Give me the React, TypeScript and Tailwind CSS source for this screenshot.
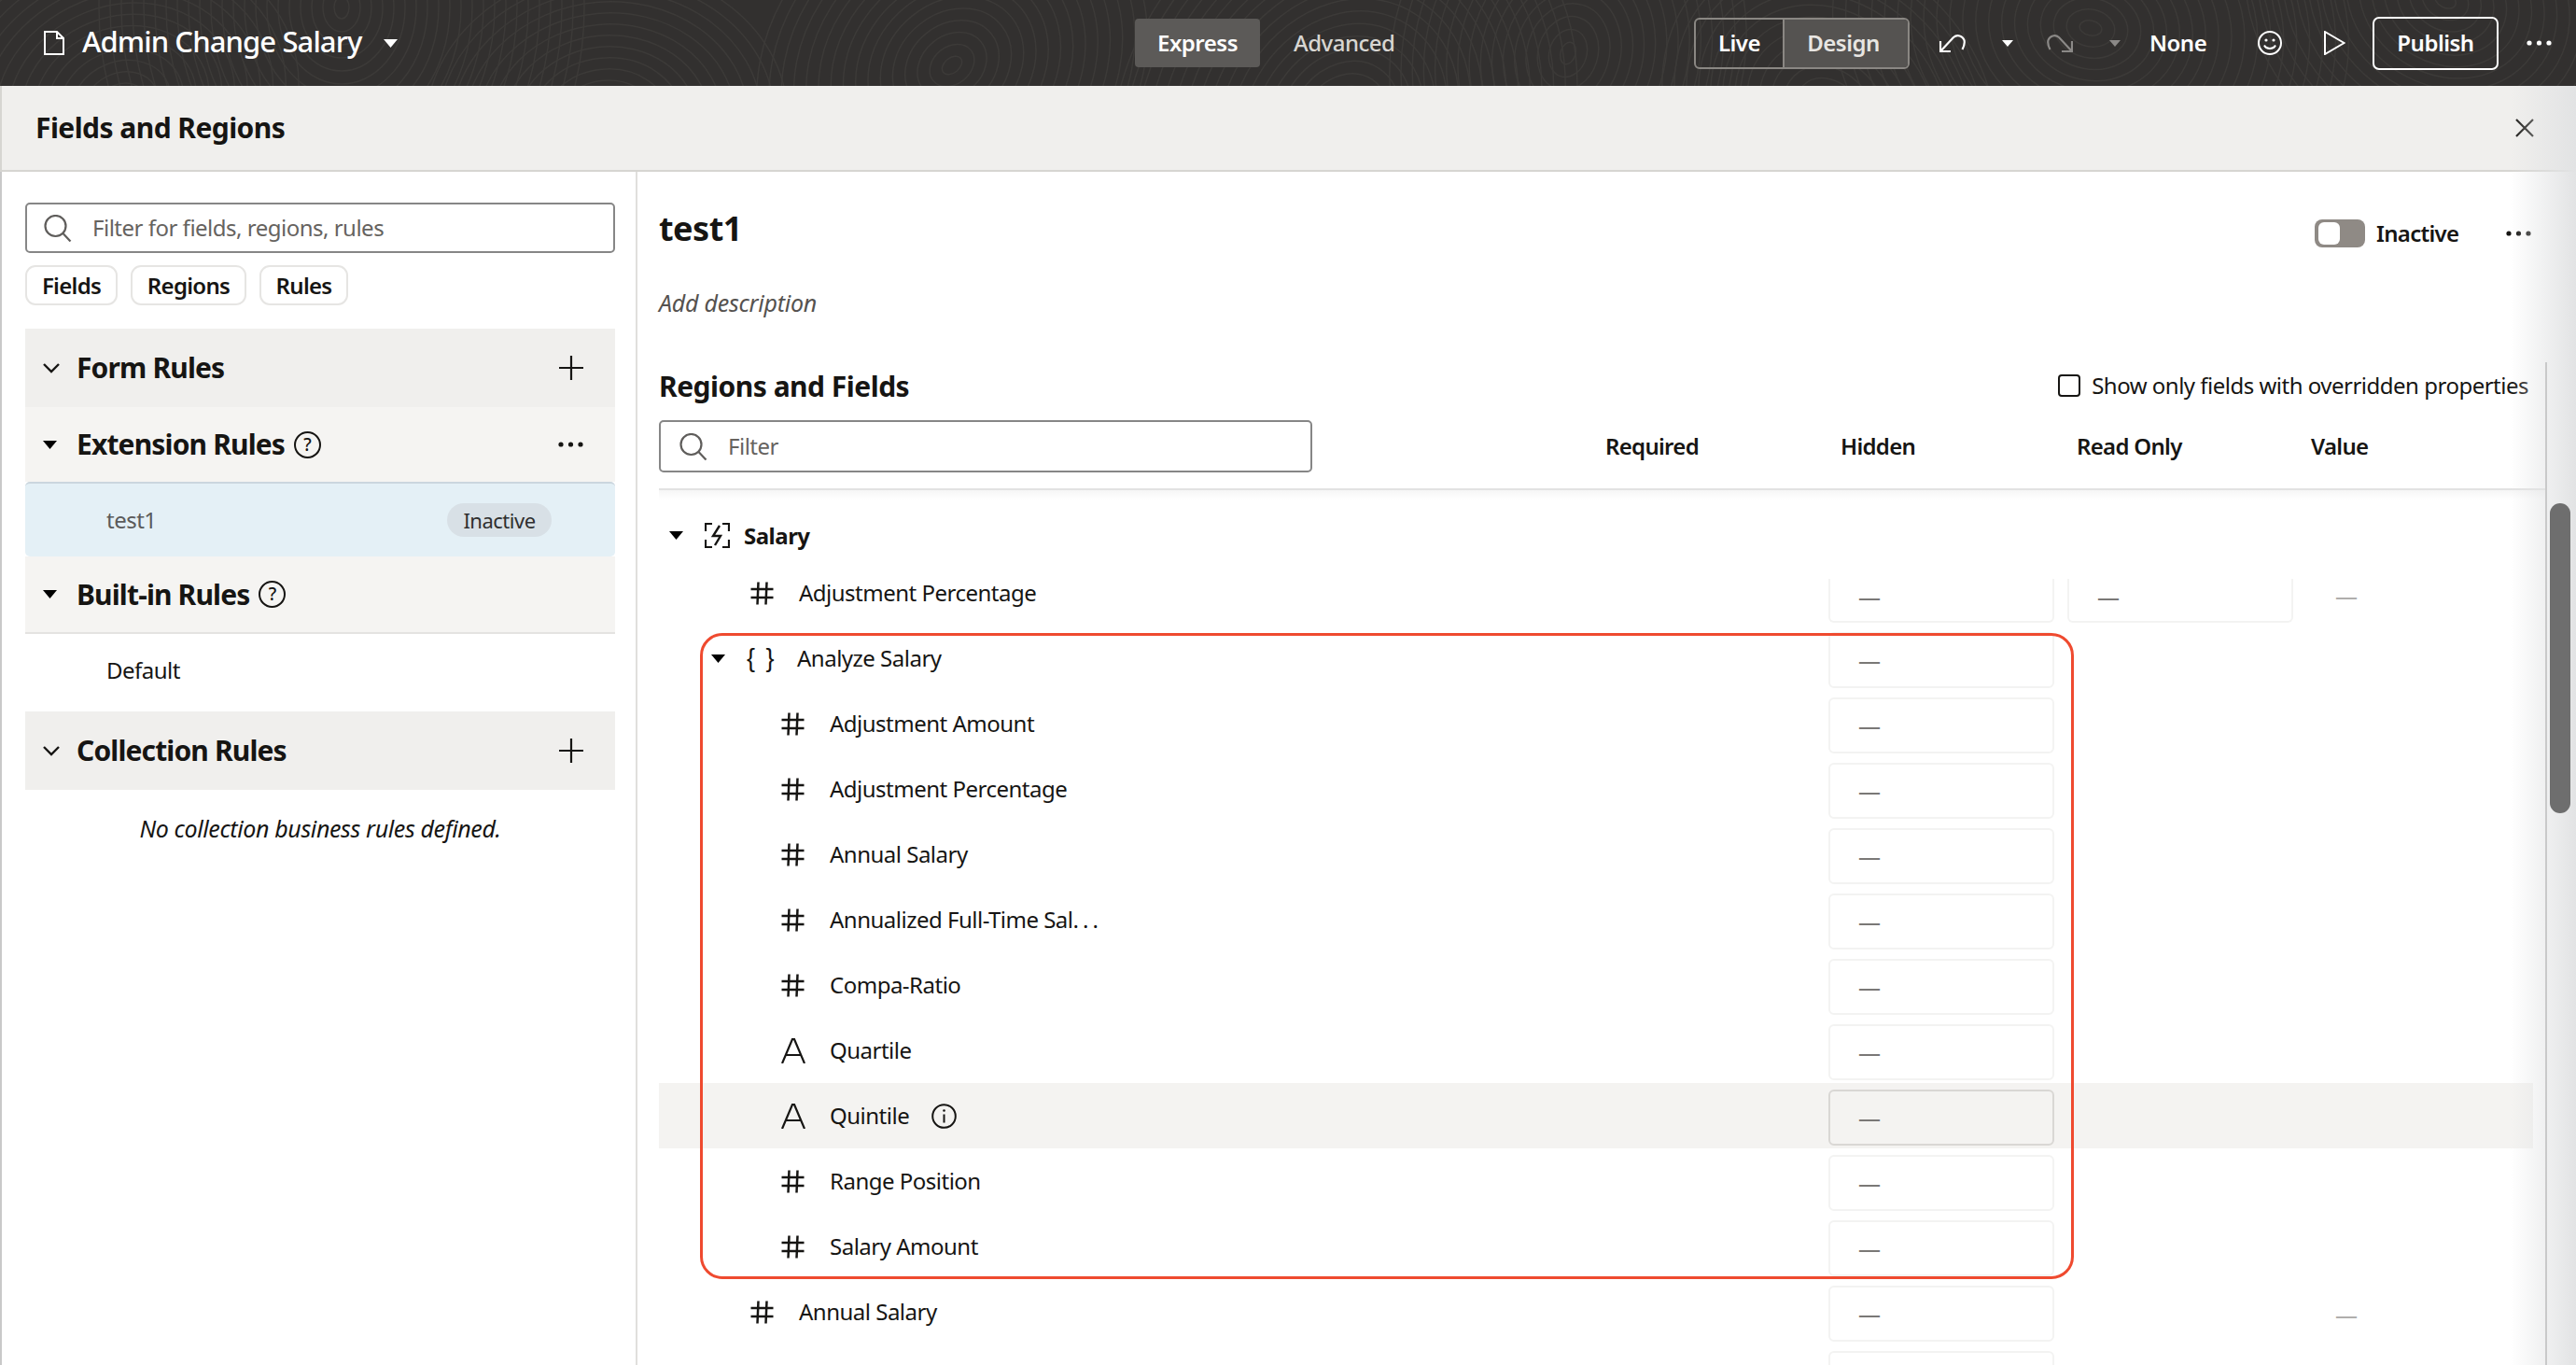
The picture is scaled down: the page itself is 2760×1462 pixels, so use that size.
import React from 'react';

type FieldIcon = 'hash' | 'text' | 'group';

interface FieldRow {
  label: string;
  icon: FieldIcon;
  child?: boolean;
  readOnly?: boolean;
  value?: boolean;
  active?: boolean;
  clipped?: boolean;
  info?: boolean;
  truncated?: boolean;
}

const rows: FieldRow[] = [
  { label: 'Adjustment Percentage', icon: 'hash', readOnly: true, value: true, clipped: true },
  { label: 'Analyze Salary', icon: 'group' },
  { label: 'Adjustment Amount', icon: 'hash', child: true },
  { label: 'Adjustment Percentage', icon: 'hash', child: true },
  { label: 'Annual Salary', icon: 'hash', child: true },
  { label: 'Annualized Full-Time Sal', icon: 'hash', child: true, truncated: true },
  { label: 'Compa-Ratio', icon: 'hash', child: true },
  { label: 'Quartile', icon: 'text', child: true },
  { label: 'Quintile', icon: 'text', child: true, active: true, info: true },
  { label: 'Range Position', icon: 'hash', child: true },
  { label: 'Salary Amount', icon: 'hash', child: true },
  { label: 'Annual Salary', icon: 'hash', value: true },
  { label: '', icon: 'hash' },
];

// contour lines in the header texture: [cx, cy, rings]
const swirls = [
  [366, 8, 22],
  [1680, 57, 16],
  [1440, 130, 20],
  [1020, 70, 16],
  [130, 110, 14],
  [650, 130, 14],
  [2240, 30, 20],
  [2620, 0, 16],
  [1960, 120, 14],
];

const HeaderTexture = () => (
  <svg className="absolute inset-0 w-full h-full" viewBox="0 0 2760 92" preserveAspectRatio="none">
    {swirls.map(([cx, cy, rings], i) => (
      <g key={i} fill="none" stroke="#3c3a38" strokeWidth="1.5">
        {Array.from({ length: rings }).map((_, r) => (
          <ellipse key={r} cx={cx} cy={cy} rx={8 + r * 12} ry={12 + r * 14} transform={`rotate(${i * 17} ${cx} ${cy})`} />
        ))}
      </g>
    ))}
  </svg>
);

const Caret = ({ className = 'text-black' }: { className?: string }) => (
  <svg width="15" height="9" viewBox="0 0 15 9" className={className}>
    <path d="M0 0h15L7.5 9z" fill="currentColor" />
  </svg>
);

const Chevron = () => (
  <svg width="18" height="11" viewBox="0 0 18 11" fill="none" stroke="#161513" strokeWidth="2.4">
    <path d="M1 1l8 8 8-8" />
  </svg>
);

const Plus = () => (
  <svg width="26" height="26" viewBox="0 0 26 26" stroke="#161513" strokeWidth="2.2">
    <path d="M13 0v26M0 13h26" />
  </svg>
);

const Dots = ({ className = 'text-[#161513]' }: { className?: string }) => (
  <svg width="27" height="6" viewBox="0 0 27 6" className={className} fill="currentColor">
    <circle cx="3" cy="3" r="2.6" />
    <circle cx="13.5" cy="3" r="2.6" />
    <circle cx="24" cy="3" r="2.6" />
  </svg>
);

const SearchIcon = () => (
  <svg width="30" height="29" viewBox="0 0 30 29" fill="none" stroke="#5f5d5b" strokeWidth="2.2">
    <circle cx="12.5" cy="12" r="11" />
    <path d="M20.5 20l8 8.5" />
  </svg>
);

const Help = () => (
  <span className="flex h-[29px] w-[29px] items-center justify-center rounded-full border-2 border-[#161513] text-[19px] font-medium leading-none tracking-normal text-[#161513]">
    ?
  </span>
);

const HashIcon = () => (
  <svg width="25" height="25" viewBox="0 0 25 25" fill="none" stroke="#161513" strokeWidth="2.5">
    <path d="M8.5 0.5L7.5 24.5M17.5 0.5L16.5 24.5M0.5 8h24M0.5 17h24" />
  </svg>
);

const LetterIcon = () => (
  <svg width="26" height="27" viewBox="0 0 26 27" fill="none" stroke="#161513" strokeWidth="2.2">
    <path d="M1 27L12 1h2l11 26M5.5 18h15" />
  </svg>
);

const InfoIcon = () => (
  <svg width="27" height="27" viewBox="0 0 27 27" fill="none" stroke="#161513" strokeWidth="2">
    <circle cx="13.5" cy="13.5" r="12.3" />
    <path d="M13.5 11.5v9" />
    <circle cx="13.5" cy="7.5" r="1.3" fill="#161513" stroke="none" />
  </svg>
);

const SalaryIcon = () => (
  <svg width="27" height="27" viewBox="0 0 27 27" fill="none" stroke="#161513" strokeWidth="2.2">
    <path d="M8 1H1v8M19 1h7v8M1 18v8h7M26 18v8h-7" />
    <path d="M16 3L9 14h8l-6 10" strokeWidth="2.4" />
  </svg>
);

const SectionRow = ({
  title,
  bg,
  chevron,
  help,
  action,
  className = '',
}: {
  title: string;
  bg: string;
  chevron?: boolean;
  help?: boolean;
  action?: React.ReactNode;
  className?: string;
}) => (
  <div className={`flex items-center pl-[19px] pr-[34px] ${bg} ${className}`}>
    <span className="flex w-[36px]">{chevron ? <Chevron /> : <Caret />}</span>
    <span className="text-[30px] font-bold leading-none tracking-[-0.85px] text-[#161513]">{title}</span>
    {help && (
      <span className="ml-[10px]">
        <Help />
      </span>
    )}
    <span className="ml-auto flex">{action}</span>
  </div>
);

const Cell = ({ active, clipped, empty }: { active?: boolean; clipped?: boolean; empty?: boolean }) => (
  <div
    className={`flex w-[242px] items-center pl-[30px] text-[24px] font-medium leading-none tracking-normal border-2 ${
      clipped ? 'mt-[20px] h-[47px] border-t-0 rounded-b-[6px] pb-[8px]' : 'mt-[7px] h-[60px] rounded-[6px]'
    } ${active ? 'border-[#d9d7d4] bg-[#f4f3f1]' : 'border-[#f3f3f2] bg-white'}`}
  >
    {!empty && <span className="text-[#7a7876]">—</span>}
  </div>
);

const TreeRow = ({ row }: { row: FieldRow }) => (
  <div className={`flex h-[70px] shrink-0 ${row.active ? 'bg-[#f4f3f1]' : ''}`}>
    <div className="flex h-[70px] w-[1253px] shrink-0 items-center text-[24px] text-[#161513]">
      {row.label &&
        (row.icon === 'group' ? (
          <>
            <span className="ml-[56px] flex w-[38px]">
              <Caret />
            </span>
            <span className="w-[54px] font-['Liberation_Sans',sans-serif] text-[27px] font-normal leading-none tracking-[2px]">{'{ }'}</span>
          </>
        ) : (
          <span className={`flex ${row.child ? 'ml-[131px] w-[52px]' : 'ml-[98px] w-[52px]'}`}>
            {row.icon === 'hash' ? <HashIcon /> : <LetterIcon />}
          </span>
        ))}
      <span>
        {row.label}
        {row.truncated && <span className="tracking-[4px]">...</span>}
      </span>
      {row.info && (
        <span className="ml-[24px] flex">
          <InfoIcon />
        </span>
      )}
    </div>
    <Cell active={row.active} clipped={row.clipped} empty={!row.label} />
    {row.readOnly && (
      <div className="ml-[14px]">
        <Cell clipped />
      </div>
    )}
    {row.value && (
      <div className={`flex items-center pt-[6px] text-[24px] font-medium leading-none tracking-normal text-[#b0aeac] ${row.readOnly ? 'ml-[45px]' : 'ml-[301px]'}`}>—</div>
    )}
  </div>
);

const App = () => {
  return (
    <div className="relative flex h-[1462px] w-[2760px] flex-col overflow-hidden bg-white font-['Noto_Sans',sans-serif] tracking-[-0.5px] text-[#161513]">
      <header className="relative flex h-[92px] shrink-0 items-center bg-[#32302f] text-white">
        <HeaderTexture />
        <div className="relative flex w-full items-center">
          <svg width="22" height="26" viewBox="0 0 22 26" fill="none" stroke="#fff" strokeWidth="2" className="ml-[47px]">
            <path d="M1 1h13l7 7v17H1zM14 1v7h7" />
          </svg>
          <span className="ml-[19px] w-[299px] whitespace-nowrap pb-[3px] text-[31px] font-medium leading-none tracking-[-0.9px]">Admin Change Salary</span>
          <span className="ml-[24px] flex">
            <Caret className="text-white" />
          </span>

          <div className="ml-[790px] flex h-[52px] w-[134px] items-center justify-center rounded-[4px] bg-[#5c5a58] text-[24px] font-semibold">Express</div>
          <span className="ml-[36px] w-[109px] whitespace-nowrap text-[24px] font-medium text-[#d8d6d2]">Advanced</span>

          <div className="ml-[320px] flex h-[55px] w-[231px] rounded-[6px] border-2 border-[#8a8783] text-[24px] font-semibold">
            <span className="flex w-[95px] items-center justify-center border-r-2 border-[#8a8783]">Live</span>
            <span className="flex flex-1 items-center justify-center rounded-r-[4px] bg-[#555351] pr-[6px] text-[#e8e6e2]">Design</span>
          </div>

          <svg width="28" height="19" viewBox="0 0 28 19" fill="none" stroke="#fff" strokeWidth="2.2" className="ml-[32px]">
            <path d="M1 7v11h11M1.5 17.5L15 3c4-3.500 10-1.500 11.500 3 .8 3-.5 7-2 10" />
          </svg>
          <span className="ml-[39px] flex">
            <Caret className="w-[12px] text-white" />
          </span>
          <svg width="28" height="19" viewBox="0 0 28 19" fill="none" stroke="#8b8987" strokeWidth="2.2" className="ml-[36px]">
            <path d="M27 7v11H16M26.500 17.500L13 3C9-.500 3 1.500 1.500 6c-.8 3 .5 7 2 10" />
          </svg>
          <span className="ml-[39px] flex">
            <Caret className="w-[12px] text-[#8b8987]" />
          </span>
          <span className="ml-[31px] w-[61px] whitespace-nowrap text-[24px] font-semibold leading-none">None</span>

          <svg width="26" height="26" viewBox="0 0 26 26" fill="none" stroke="#fff" strokeWidth="2" className="ml-[55px]">
            <circle cx="13" cy="13" r="12" />
            <circle cx="9" cy="10" r="1.600" fill="#fff" stroke="none" />
            <circle cx="17" cy="10" r="1.600" fill="#fff" stroke="none" />
            <path d="M7 15.500c2 4.500 10 4.500 12 0" />
          </svg>
          <svg width="23" height="26" viewBox="0 0 23 26" fill="none" stroke="#fff" strokeWidth="2" className="ml-[45px]">
            <path d="M1 1l20.500 12L1 25z" />
          </svg>
          <div className="ml-[29px] flex h-[57px] w-[135px] items-center justify-center rounded-[7px] border-2 border-white text-[24px] font-semibold">Publish</div>
          <span className="ml-[30px] flex">
            <Dots className="text-white" />
          </span>
        </div>
      </header>

      <div className="flex h-[92px] shrink-0 items-center justify-between border-b-2 border-l-2 border-[#d6d5d1] bg-[#f0efed] pl-[36px]">
        <h1 className="text-[30px] font-bold leading-none tracking-[-0.55px]">Fields and Regions</h1>
        <svg width="20" height="20" viewBox="0 0 20 20" stroke="#161513" strokeWidth="2.2" className="mr-[45px]">
          <path d="M1 1l18 18M19 1L1 19" />
        </svg>
      </div>

      <div className="flex min-h-0 flex-1 border-l-2 border-[#c9c9c9]">
        <aside className="flex w-[681px] shrink-0 flex-col border-r-2 border-[#e0dfdd] pl-[25px] pr-[22px]">
          <div className="mt-[33px] flex h-[54px] shrink-0 items-center rounded-[5px] border-2 border-[#868686] pl-[18px]">
            <SearchIcon />
            <span className="ml-[22px] text-[24px] text-[#66635f]">Filter for fields, regions, rules</span>
          </div>
          <div className="mt-[13px] flex shrink-0 gap-[14px] text-[24px] font-semibold tracking-[-0.7px]">
            <span className="flex h-[43px] w-[99px] items-center justify-center rounded-[11px] border-2 border-[#e6e5e3]">Fields</span>
            <span className="flex h-[43px] w-[124px] items-center justify-center rounded-[11px] border-2 border-[#e6e5e3]">Regions</span>
            <span className="flex h-[43px] w-[95px] items-center justify-center rounded-[11px] border-2 border-[#e6e5e3]">Rules</span>
          </div>

          <SectionRow className="mt-[25px] h-[84px] shrink-0" title="Form Rules" bg="bg-[#f0efed]" chevron action={<Plus />} />
          <SectionRow className="h-[80px] shrink-0" title="Extension Rules" bg="bg-[#f5f4f2]" help action={<Dots />} />
          <div className="flex h-[80px] shrink-0 items-center rounded-[5px] border-t-2 border-[#cbd6de] bg-[#e4f0f6] pl-[87px] pr-[68px]">
            <span className="text-[24px] text-[#5b5b5b]">test1</span>
            <span className="ml-auto flex h-[36px] w-[112px] items-center justify-center rounded-full bg-[#d8e0e6] text-[22px] text-[#2f2f2f]">Inactive</span>
          </div>
          <SectionRow className="h-[83px] shrink-0 border-b-2 border-[#e4e3e1]" title="Built-in Rules" bg="bg-[#f5f4f2]" help />
          <div className="flex h-[83px] shrink-0 items-center pb-[6px] pl-[87px] text-[24px]">Default</div>
          <SectionRow className="h-[84px] shrink-0" title="Collection Rules" bg="bg-[#f0efed]" chevron action={<Plus />} />
          <p className="mt-[29px] text-center text-[25px] italic leading-none tracking-[-0.38px]">No collection business rules defined.</p>
        </aside>

        <main className="flex min-w-0 flex-1 flex-col pl-[23px]">
          <div className="mt-[31px] flex h-[60px] w-[2006px] shrink-0 items-center justify-between">
            <h2 className="text-[36px] font-bold leading-none">test1</h2>
            <div className="mt-[10px] flex items-center">
              <span className="flex h-[30px] w-[54px] items-center rounded-[8px] bg-[#8f8a85] pl-[4px]">
                <span className="h-[24px] w-[23px] rounded-[6px] bg-white" />
              </span>
              <span className="ml-[12px] w-[87px] whitespace-nowrap text-[24px] font-semibold leading-none tracking-[-0.7px]">Inactive</span>
              <span className="ml-[52px] flex">
                <Dots />
              </span>
            </div>
          </div>
          <p className="mt-[32px] h-[34px] shrink-0 text-[25px] italic leading-[34px] tracking-[-0.25px] text-[#55524f]">Add description</p>

          <div className="mt-[55px] flex h-[36px] w-[2003px] shrink-0 items-center justify-between">
            <h2 className="text-[30px] font-bold leading-none">Regions and Fields</h2>
            <label className="flex items-center pb-[3px]">
              <span className="h-[24px] w-[24px] rounded-[4px] border-2 border-[#161513]" />
              <span className="ml-[12px] text-[24px] leading-none">Show only fields with overridden properties</span>
            </label>
          </div>

          <div className="mt-[18px] flex h-[56px] shrink-0 items-center">
            <div className="flex h-[56px] w-[700px] shrink-0 items-center rounded-[5px] border-2 border-[#868686] pl-[20px]">
              <SearchIcon />
              <span className="ml-[22px] text-[24px] text-[#66635f]">Filter</span>
            </div>
            <div className="ml-[314px] flex text-[24px] font-semibold tracking-[-0.7px]">
              <span className="w-[252px]">Required</span>
              <span className="w-[253px]">Hidden</span>
              <span className="w-[251px]">Read Only</span>
              <span>Value</span>
            </div>
          </div>

          <div className="mt-[17px] h-[2px] w-[2022px] shrink-0 bg-[#e2e2e2]" />
          <div className="h-[10px] w-[2022px] shrink-0 bg-gradient-to-b from-[#f6f6f6] to-white" />

          <div className="flex h-[65px] shrink-0 items-center pt-[12px]">
            <span className="ml-[11px] flex w-[38px]">
              <Caret />
            </span>
            <SalaryIcon />
            <span className="ml-[15px] text-[24px] font-bold leading-none">Salary</span>
          </div>

          <div className="w-[2008px] shrink-0">
            {rows.map((row, i) => (
              <TreeRow key={i} row={row} />
            ))}
          </div>
        </main>
      </div>

      {/* callout drawn on top of the rows */}
      <div className="pointer-events-none absolute left-[750px] top-[678px] h-[692px] w-[1472px] rounded-[24px] border-[3px] border-[#ef4a2f]" />

      {/* scrollbar and the edge shadow of the panel */}
      <div className="pointer-events-none absolute bottom-0 right-0 top-[92px] w-[70px] bg-gradient-to-r from-transparent to-[#e2e3e4]" />
      <div className="absolute bottom-0 right-[31px] top-[388px] w-[2px] bg-[#c9c9c9]" />
      <div className="absolute right-[6px] top-[539px] h-[332px] w-[22px] rounded-full bg-[#6e6e6e]" />
    </div>
  );
};

export default App;
